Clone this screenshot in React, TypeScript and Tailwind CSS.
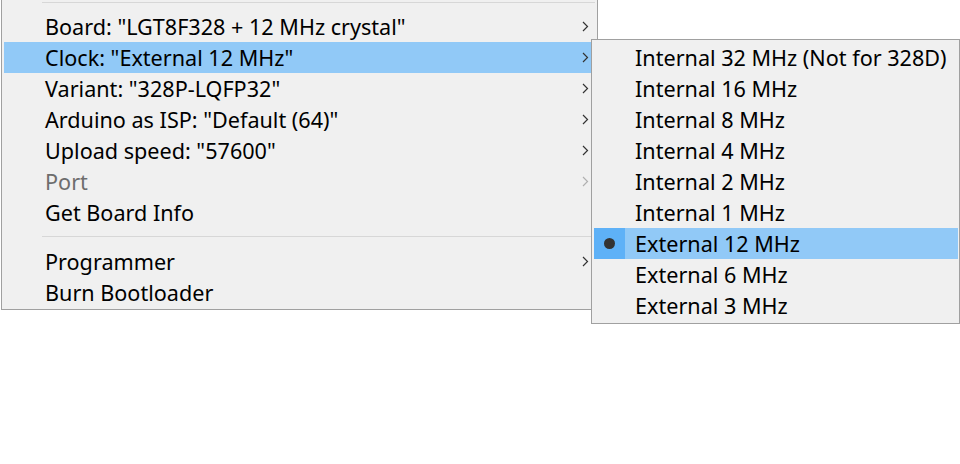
import React from "react";

const FONT = { fontFamily: '"Noto Sans", "Open Sans", sans-serif' };

function Chevron({ dim }: { dim?: boolean }) {
  return (
    <svg width="7" height="11" viewBox="0 0 7 11" className="absolute right-[6px] top-[10px]">
      <path d="M1 1 L5.5 5.5 L1 10" fill="none" stroke={dim ? "#b0b0b0" : "#333333"} strokeWidth="1.2" />
    </svg>
  );
}

type Item = { label: string; sub?: boolean; dim?: boolean; hl?: boolean };

function Row({ item }: { item: Item }) {
  return (
    <div
      className={`relative h-[31px] flex items-center pl-[41px] text-[21.6px] leading-none ${
        item.hl ? "bg-[#91c9f7]" : ""
      } ${item.dim ? "text-[#6d6d6d]" : "text-black"}`}
    >
      <span className="whitespace-nowrap">{item.label}</span>
      {item.sub && <Chevron dim={item.dim} />}
    </div>
  );
}

export default function App() {
  const top: Item[] = [
    { label: 'Board: "LGT8F328 + 12 MHz crystal"', sub: true },
    { label: 'Clock: "External 12 MHz"', sub: true, hl: true },
    { label: 'Variant: "328P-LQFP32"', sub: true },
    { label: 'Arduino as ISP: "Default (64)"', sub: true },
    { label: 'Upload speed: "57600"', sub: true },
    { label: "Port", sub: true, dim: true },
    { label: "Get Board Info" },
  ];
  const bottom: Item[] = [{ label: "Programmer", sub: true }, { label: "Burn Bootloader" }];
  const subItems = [
    "Internal 32 MHz (Not for 328D)",
    "Internal 16 MHz",
    "Internal 8 MHz",
    "Internal 4 MHz",
    "Internal 2 MHz",
    "Internal 1 MHz",
    "External 12 MHz",
    "External 6 MHz",
    "External 3 MHz",
  ];
  return (
    <div className="relative w-[960px] h-[464px] bg-white overflow-hidden" style={FONT}>
      {/* main menu */}
      <div className="ml-[1px] w-[597px] bg-[#f0f0f0] border-l border-r border-b border-[#a0a0a0] pl-[2px] pr-[2px] pb-[1px]">
        <div className="h-[11px] pt-[2px]">
          <div className="ml-[38px] h-px bg-[#d7d7d7]" />
        </div>
        {top.map((it) => (
          <Row key={it.label} item={it} />
        ))}
        <div className="h-[18px] pt-[8px]">
          <div className="ml-[38px] h-px bg-[#d7d7d7]" />
        </div>
        {bottom.map((it) => (
          <Row key={it.label} item={it} />
        ))}
      </div>
      {/* submenu */}
      <div className="absolute left-[591px] top-[39px] w-[369px] bg-[#f0f0f0] border border-[#a0a0a0] pl-[2px] pr-[1px] py-[2px]">
        {subItems.map((s) => {
          const sel = s === "External 12 MHz";
          return (
            <div
              key={s}
              className={`relative h-[31px] flex items-center text-[21.6px] leading-none text-black ${
                sel ? "bg-[#91c9f7]" : ""
              }`}
            >
              <div className={`w-[31px] h-full flex items-center justify-center ${sel ? "bg-[#5eb1f7]" : ""}`}>
                {sel && <div className="w-[11px] h-[11px] rounded-full bg-[#333333]" />}
              </div>
              <span className="pl-[10px] whitespace-nowrap">{s}</span>
            </div>
          );
        })}
      </div>
    </div>
  );
}
